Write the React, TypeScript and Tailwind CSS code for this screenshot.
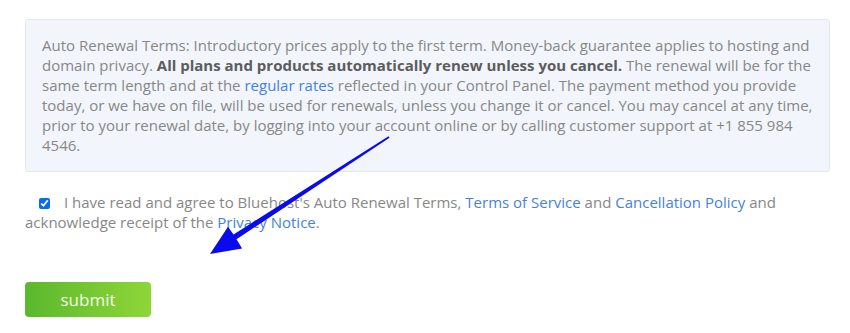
import React from "react";

export default function App() {
  return (
    <div
      className="relative w-[850px] h-[333px] bg-white overflow-hidden"
      style={{ fontFamily: '"Open Sans", sans-serif' }}
    >
      <div className="pl-[25px] pt-[19px]">
        <div className="w-[805px] rounded-[3px] border border-[#e2e8f0] bg-[#f2f6fc] pl-[16px] pr-[14px] pt-[15px] pb-[16px] text-[15px] leading-[20px] text-[#878787]">
          Auto Renewal Terms: Introductory prices apply to the first term. Money-back guarantee applies to hosting and domain privacy.{" "}
          <b className="font-bold text-[#5c5c5c]">All plans and products automatically renew unless you cancel.</b>{" "}
          The renewal will be for the same term length and at the{" "}
          <span className="text-[#4683d6]">regular rates</span> reflected in your Control Panel. The payment method you provide today, or we have on file, will be used for renewals, unless you change it or cancel. You may cancel at any time, prior to your renewal date, by logging into your account online or by calling customer support at +1 855 984 4546.
        </div>

        <div className="mt-[20px] w-[790px] text-[15px] leading-[20px] text-[#878787]">
          <input
            type="checkbox"
            defaultChecked
            className="ml-[14px] mr-[14px] h-[11px] w-[11px] align-[-1px] accent-[#0b6bef]"
          />
          I have read and agree to Bluehost's Auto Renewal Terms,{" "}
          <span className="text-[#4683d6]">Terms of Service</span> and{" "}
          <span className="text-[#4683d6]">Cancellation Policy</span> and acknowledge receipt of the{" "}
          <span className="text-[#4683d6]">Privacy Notice</span>.
        </div>

        <button className="mt-[50px] flex h-[35px] w-[126px] items-center justify-center rounded-[4px] bg-gradient-to-r from-[#5ab82d] to-[#8ed638] text-[17px] text-[#f4fbe8]">
          submit
        </button>
      </div>

      <svg className="absolute left-0 top-0" width="850" height="333" viewBox="0 0 850 333">
        <polygon
          points="389.5,137.8 388.5,136.2 233.5,234.5 228,226.7 210,254 242.1,248.5 236.5,239.3"
          fill="#0a0af0"
        />
      </svg>
    </div>
  );
}
